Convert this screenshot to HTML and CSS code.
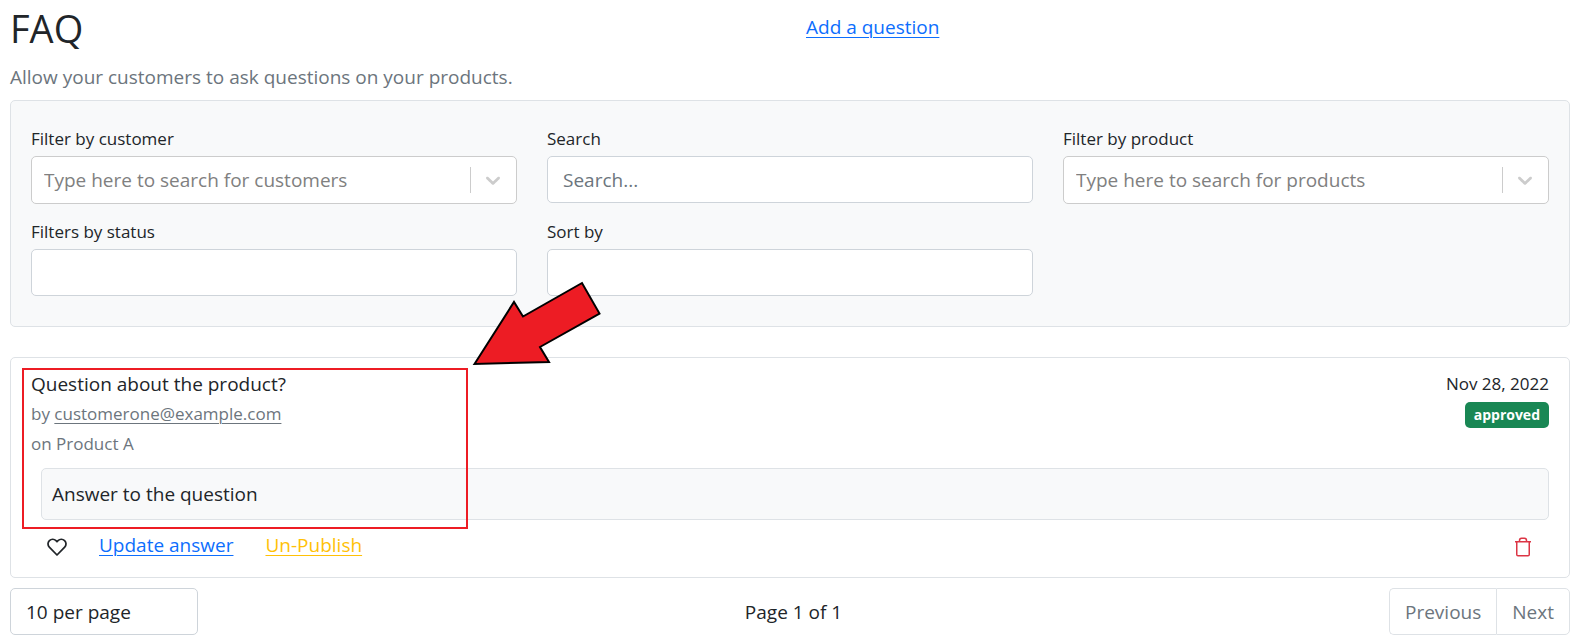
FILE: index.html
```html
<!DOCTYPE html>
<html lang="en">
<head>
<meta charset="utf-8">
<meta name="viewport" content="width=device-width, initial-scale=1">
<title>FAQ</title>
<link rel="stylesheet" href="styles.css">
</head>
<body>
<main class="page">
  <header class="page-header">
    <h1 class="title">FAQ</h1>
    <div><a class="btn-link" href="#add">Add a question</a></div>
  </header>
  <p class="subtitle">Allow your customers to ask questions on your products.</p>

  <form class="filters">
    <div class="field">
      <label class="label" for="customer">Filter by customer</label>
      <div class="combo">
        <input class="combo-input" id="customer" type="text" placeholder="Type here to search for customers">
        <span class="combo-arrow"><svg width="24" height="24" viewBox="0 0 20 20" aria-hidden="true"><path fill="currentColor" d="M4.516 7.548c0.436-0.446 1.043-0.481 1.576 0l3.908 3.747 3.908-3.747c0.533-0.481 1.141-0.446 1.574 0 0.436 0.445 0.408 1.197 0 1.615-0.406 0.418-4.695 4.502-4.695 4.502-0.217 0.223-0.502 0.335-0.787 0.335s-0.57-0.112-0.789-0.335c0 0-4.287-4.084-4.695-4.502s-0.436-1.17 0-1.615z"/></svg></span>
      </div>
    </div>
    <div class="field">
      <label class="label" for="search">Search</label>
      <input class="control" id="search" type="text" placeholder="Search...">
    </div>
    <div class="field">
      <label class="label" for="product">Filter by product</label>
      <div class="combo">
        <input class="combo-input" id="product" type="text" placeholder="Type here to search for products">
        <span class="combo-arrow"><svg width="24" height="24" viewBox="0 0 20 20" aria-hidden="true"><path fill="currentColor" d="M4.516 7.548c0.436-0.446 1.043-0.481 1.576 0l3.908 3.747 3.908-3.747c0.533-0.481 1.141-0.446 1.574 0 0.436 0.445 0.408 1.197 0 1.615-0.406 0.418-4.695 4.502-4.695 4.502-0.217 0.223-0.502 0.335-0.787 0.335s-0.57-0.112-0.789-0.335c0 0-4.287-4.084-4.695-4.502s-0.436-1.17 0-1.615z"/></svg></span>
      </div>
    </div>
    <div class="field">
      <label class="label" for="status">Filters by status</label>
      <select class="control" id="status"><option></option></select>
    </div>
    <div class="field">
      <label class="label" for="sort">Sort by</label>
      <select class="control" id="sort"><option></option></select>
    </div>
  </form>

  <article class="card">
    <div class="card-head">
      <div>
        <h2 class="question">Question about the product?</h2>
        <p class="meta">by <a class="meta-link" href="mailto:customerone@example.com">customerone@example.com</a></p>
        <p class="meta">on Product A</p>
      </div>
      <div class="card-side">
        <time class="date" datetime="2022-11-28">Nov 28, 2022</time>
        <span class="badge">approved</span>
      </div>
    </div>
    <div class="answer">Answer to the question</div>
    <div class="actions">
      <button class="icon-btn" type="button" aria-label="Like"><svg width="20" height="20" viewBox="0 0 20 20" fill="none" stroke="currentColor" stroke-width="1.750" stroke-linejoin="round" aria-hidden="true"><path d="M10 18 2.300 10.200C.500 8.300.600 5.300 2.400 3.600 4.300 1.800 7.200 1.900 9 3.700L10 4.700 11 3.700C12.800 1.900 15.700 1.800 17.600 3.600 19.400 5.300 19.500 8.300 17.700 10.200Z"/></svg></button>
      <a class="btn-link" href="#update">Update answer</a>
      <a class="btn-link btn-warning" href="#unpublish">Un-Publish</a>
      <button class="icon-btn icon-delete" type="button" aria-label="Delete"><svg width="20" height="20" viewBox="0 0 20 20" fill="none" stroke="currentColor" aria-hidden="true"><path stroke-width="1.5" d="M2 4.75H18M3.75 5V17.5Q3.75 18.75 5 18.75H15Q16.25 18.75 16.25 17.5V5M6.5 4.5V3.5Q6.5 1.25 8.5 1.25H11.5Q13.5 1.25 13.5 3.5V4.5"/></svg></button>
    </div>
    <div class="highlight"></div>
    <svg class="pointer" width="134" height="88" viewBox="0 0 134 88" aria-hidden="true"><path d="M4.500 83 44 21 53 35.500 112 2 129.500 32.500 70 66 79 81Z" fill="#ed1c24" stroke="#000" stroke-width="2"/></svg>
  </article>

  <footer class="pager">
    <select class="control page-size" aria-label="Items per page"><option>10 per page</option></select>
    <span>Page 1 of 1</span>
    <div class="pager-nav">
      <button class="page-btn" type="button">Previous</button>
      <button class="page-btn" type="button">Next</button>
    </div>
  </footer>
</main>
</body>
</html>
```
FILE: styles.css
```css
* { box-sizing: border-box; }

body {
  margin: 0;
  background: #fff;
  color: #212529;
  font: 19px/30px "Open Sans", "Noto Sans", sans-serif;
}

h1, h2, p { margin: 0; font-weight: 400; }

input, select, button { font: inherit; color: inherit; }

.page { padding: 4px 8px 6px 10px; }

.page-header { display: grid; grid-template-columns: 1fr 1fr; min-height: 58px; }

.title { font-size: 38px; line-height: 48px; }

.btn-link {
  display: inline-block;
  padding: 8px 16px;
  color: #0d6efd;
  text-decoration: underline;
  text-decoration-thickness: 1px;
  text-underline-offset: 3px;
}

.btn-warning { color: #ffc107; }

.subtitle { color: #6c757d; margin-bottom: 8px; }

.filters {
  display: grid;
  grid-template-columns: repeat(3, 1fr);
  gap: 14px 30px;
  padding: 25px 20px 30px;
  margin-bottom: 30px;
  background: #f8f9fa;
  border: 1px solid #dee2e6;
  border-radius: 5px;
}

.label { display: block; padding-bottom: 5px; font-size: 17px; line-height: 25px; }

.control {
  display: block;
  width: 100%;
  height: 47px;
  padding: 0 15px;
  appearance: none;
  background: #fff;
  border: 1px solid #ced4da;
  border-radius: 5px;
}

.control::placeholder { color: #6c757d; opacity: 1; }

.combo {
  display: flex;
  align-items: center;
  height: 48px;
  background: #fff;
  border: 1px solid #ccc;
  border-radius: 5px;
}

.combo-input {
  flex: 1;
  min-width: 0;
  padding: 0 12px;
  border: 0;
  background: transparent;
}

.combo-input::placeholder { color: #808080; opacity: 1; }

.combo-arrow {
  display: flex;
  align-items: center;
  height: 26px;
  padding: 0 11px 0 10px;
  border-left: 1px solid #ccc;
  color: #ccc;
}

.filters { row-gap: 15px; }

.card {
  position: relative;
  padding: 11px 20px 9px;
  margin-bottom: 10px;
  border: 1px solid #dee2e6;
  border-radius: 5px;
}

.card-head { display: flex; justify-content: space-between; margin-bottom: 9px; }

.question { font-size: 19px; line-height: 30px; }

.meta { color: #6c757d; font-size: 17px; }

.meta-link { color: inherit; text-decoration-thickness: 1px; text-underline-offset: 3px; }

.card-side { display: flex; flex-direction: column; align-items: flex-end; gap: 3px; }

.date { font-size: 17px; }

.badge {
  padding: 0 9px;
  background: #198754;
  border-radius: 5px;
  color: #fff;
  font-size: 14px;
  font-weight: 700;
  line-height: 26px;
}

.answer {
  padding: 10px;
  margin-left: 10px;
  background: #f8f9fa;
  border: 1px solid #dee2e6;
  border-radius: 5px;
}

.actions { display: flex; align-items: center; padding-top: 2px; }

.icon-btn {
  display: flex;
  padding: 15px 16px 11px;
  border: 0;
  background: none;
}

.icon-delete { margin-left: auto; color: #dc3545; }

.highlight {
  position: absolute;
  top: 10px;
  left: 11px;
  width: 446px;
  height: 161px;
  border: 2px solid #ed1c24;
}

.pointer { position: absolute; top: -77px; left: 459px; }

.pager { display: flex; justify-content: space-between; align-items: center; }

.page-size { width: 188px; }

.pager-nav { display: flex; }

.page-btn {
  height: 47px;
  padding: 0 15px;
  background: #fff;
  border: 1px solid #dee2e6;
  color: #6c757d;
}

.page-btn:first-child { border-radius: 5px 0 0 5px; border-right: 0; }

.page-btn:last-child { border-radius: 0 5px 5px 0; }
```
